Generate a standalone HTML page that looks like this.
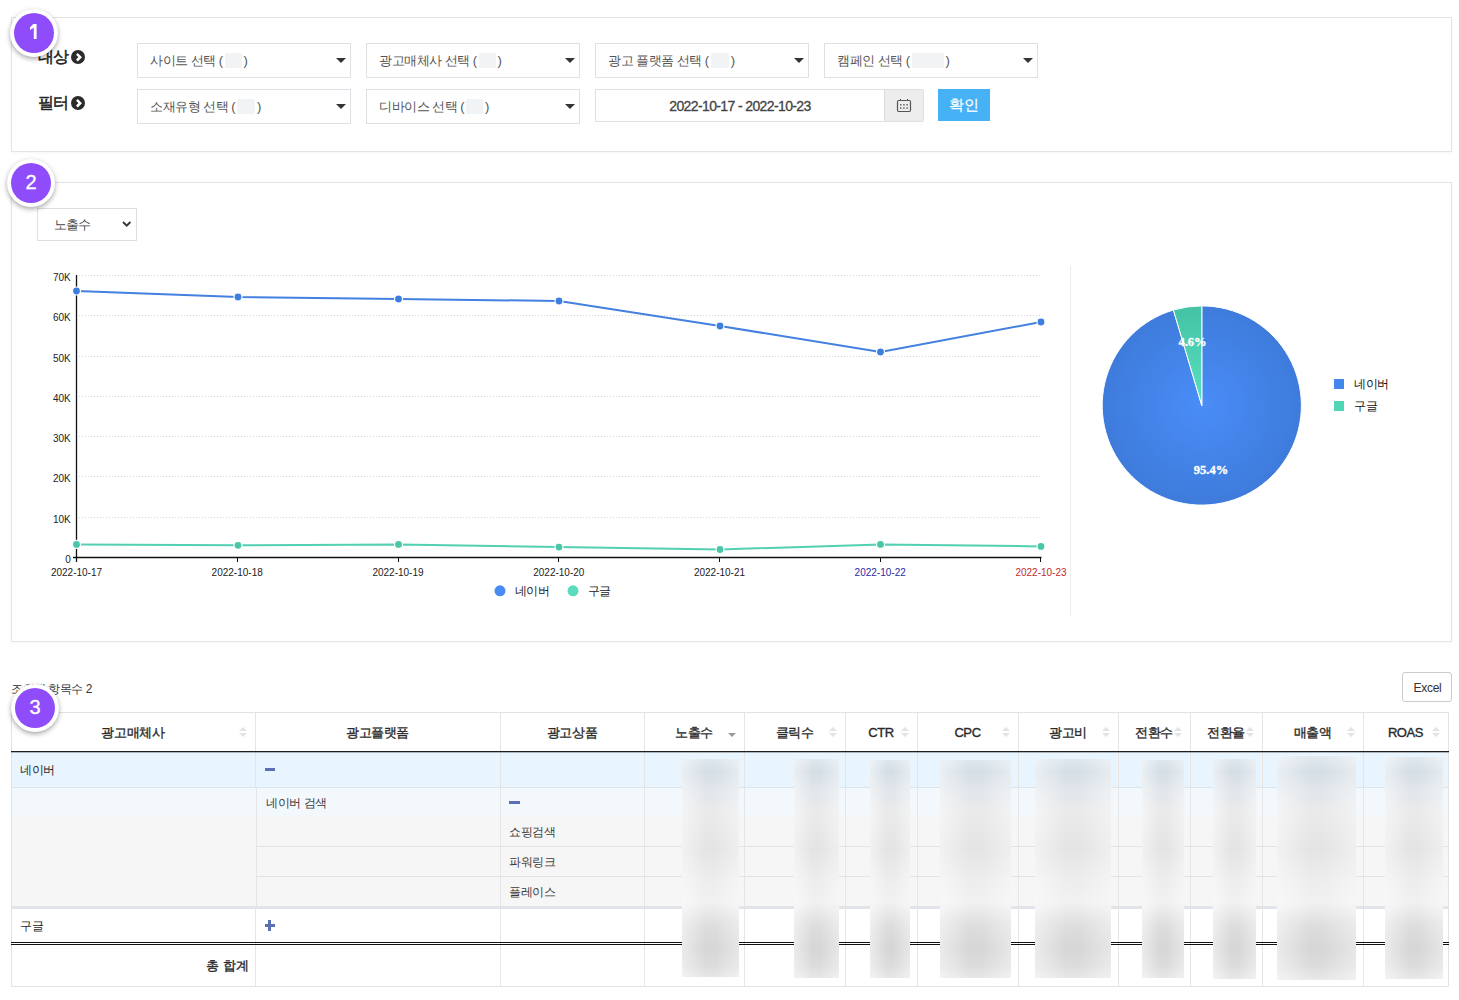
<!DOCTYPE html>
<html><head><meta charset="utf-8">
<style>
*{box-sizing:border-box;margin:0;padding:0}
html,body{width:1459px;height:1000px;overflow:hidden;background:#fff}
body{position:relative;font-family:"Liberation Sans",sans-serif;color:#333}
.abs{position:absolute}
.box{position:absolute;border:1px solid #e2e4e7;background:#fff;box-shadow:0 1px 3px rgba(0,0,0,.04)}
.sel{position:absolute;height:35px;width:214px;border:1px solid #dde0e4;background:#fff;font-size:13px;color:#555;line-height:33px;padding-left:12px;white-space:nowrap;letter-spacing:-0.5px}
.sel .tri{position:absolute;left:198px;top:14px;width:0;height:0;border-left:5px solid transparent;border-right:5px solid transparent;border-top:5px solid #333}
.sel .bl{display:inline-block;vertical-align:middle;height:15px;background:#f1f3f5;border-radius:2px;margin:0 2px;position:relative;top:-1px}
.lbl{position:absolute;font-size:16px;font-weight:normal;color:#222;line-height:16px;letter-spacing:-0.6px;-webkit-text-stroke:0.5px #222}
.chev{position:absolute;width:14px;height:14px;border-radius:50%;background:#2b2b2b}
.badge{position:absolute;width:48px;height:48px;border-radius:50%;background:#fff;box-shadow:0 2px 5px rgba(0,0,0,.35)}
.badge span{position:absolute;left:4px;top:4px;width:40px;height:40px;border-radius:50%;background:#8f4cfa;color:#fff;font-size:20px;line-height:39px;text-align:center;-webkit-text-stroke:0.3px #fff}
.th{position:absolute;top:714px;height:38px;line-height:38px;text-align:center;font-size:13px;font-weight:normal;color:#2a2a2a;letter-spacing:-0.4px;-webkit-text-stroke:0.35px #2a2a2a}
.sorti{position:absolute;top:727px;width:8px;height:10px}
.sorti:before{content:"";position:absolute;left:0;top:0;border-left:4px solid transparent;border-right:4px solid transparent;border-bottom:4px solid #e3e3e3}
.sorti:after{content:"";position:absolute;left:0;top:6px;border-left:4px solid transparent;border-right:4px solid transparent;border-top:4px solid #e3e3e3}
.td{position:absolute;font-size:12px;line-height:16px;color:#333;white-space:nowrap;letter-spacing:-0.4px}
.blur{position:absolute;overflow:hidden;background:#ededed}
.bi{position:absolute;left:-10px;right:-10px;top:0;bottom:0;filter:blur(9px)}
.bi b{position:absolute;left:18px;right:18px}
</style></head>
<body>

<!-- Section 1 -->
<div class="box" style="left:11px;top:17px;width:1441px;height:135px"></div>
<div class="lbl" style="left:38px;top:49px">대상</div>
<div class="chev" style="left:71px;top:50px"><svg width="14" height="14" viewBox="0 0 14 14"><path d="M5.9 3.9 L9.2 7.2 L5.9 10.5" fill="none" stroke="#fff" stroke-width="2.5"/></svg></div>
<div class="lbl" style="left:38px;top:95px">필터</div>
<div class="chev" style="left:71px;top:96px"><svg width="14" height="14" viewBox="0 0 14 14"><path d="M5.9 3.9 L9.2 7.2 L5.9 10.5" fill="none" stroke="#fff" stroke-width="2.5"/></svg></div>

<div class="sel" style="left:137px;top:43px">사이트 선택 (<span class="bl" style="width:17px"></span>)<i class="tri"></i></div>
<div class="sel" style="left:366px;top:43px">광고매체사 선택 (<span class="bl" style="width:17px"></span>)<i class="tri"></i></div>
<div class="sel" style="left:595px;top:43px">광고 플랫폼 선택 (<span class="bl" style="width:18px"></span>)<i class="tri"></i></div>
<div class="sel" style="left:824px;top:43px">캠페인 선택 (<span class="bl" style="width:32px"></span>)<i class="tri"></i></div>
<div class="sel" style="left:137px;top:89px">소재유형 선택 (<span class="bl" style="width:18px"></span>)<i class="tri"></i></div>
<div class="sel" style="left:366px;top:89px">디바이스 선택 (<span class="bl" style="width:17px"></span>)<i class="tri"></i></div>

<div class="abs" style="left:595px;top:89px;width:329px;height:33px;border:1px solid #dde0e4;border-radius:0 2px 2px 0;background:#fff">
  <div class="abs" style="left:0;top:0;width:288px;height:31px;text-align:center;font-size:14px;font-weight:normal;-webkit-text-stroke:0.3px #444;color:#444;line-height:33px;letter-spacing:-0.62px">2022-10-17 - 2022-10-23</div>
  <div class="abs" style="left:288px;top:0;width:39px;height:31px;background:#ededed;border-left:1px solid #dcdcdc">
    <svg class="abs" style="left:11px;top:8px" width="16" height="15" viewBox="0 0 16 15"><rect x="1.5" y="2.5" width="13" height="11" rx="1.2" fill="none" stroke="#555" stroke-width="1.2"/><path d="M4.5 1v2M11.5 1v2" stroke="#555" stroke-width="1"/><g fill="#666"><rect x="4" y="6" width="1.5" height="1.5"/><rect x="7.2" y="6" width="1.5" height="1.5"/><rect x="10.4" y="6" width="1.5" height="1.5"/><rect x="4" y="9.3" width="1.5" height="1.5"/><rect x="7.2" y="9.3" width="1.5" height="1.5"/><rect x="10.4" y="9.3" width="1.5" height="1.5"/></g></svg>
  </div>
</div>
<div class="abs" style="left:938px;top:89px;width:52px;height:32px;background:#46b1f5;color:#fff;font-size:14.5px;line-height:33px;text-align:center;-webkit-text-stroke:0.2px #fff">확인</div>

<!-- Section 2 -->
<div class="box" style="left:11px;top:182px;width:1441px;height:460px"></div>
<div class="abs" style="left:37px;top:208px;width:100px;height:33px;border:1px solid #dedede;font-size:13px;color:#444;line-height:31px;padding-left:16px;letter-spacing:-1px">노출수
  <svg class="abs" style="left:84px;top:12px" width="11" height="8" viewBox="0 0 11 8"><path d="M1 1 L4.7 4.7 L8.4 1" fill="none" stroke="#3a3a3a" stroke-width="2"/></svg>
</div>
<div class="abs" style="left:1070px;top:266px;width:1px;height:350px;background:#ececec"></div>

<!-- Section 3 header -->
<div class="abs" style="left:11px;top:682px;font-size:12px;color:#333;line-height:14px;letter-spacing:-0.5px">조회된 항목수&nbsp;2</div>
<div class="abs" style="left:1402px;top:672px;width:50px;height:30px;border:1px solid #ccc;border-radius:3px;font-size:12px;color:#333;line-height:30px;text-align:center;letter-spacing:-0.3px;padding-left:1px">Excel</div>

<div class="abs" style="left:11px;top:752px;width:1437px;height:35px;background:#e9f5fe"></div>
<div class="abs" style="left:11px;top:787px;width:1437px;height:1px;background:#dde5ec"></div>
<div class="abs" style="left:11px;top:788px;width:1437px;height:29px;background:#f3f8fd"></div>
<div class="abs" style="left:11px;top:817px;width:1437px;height:89px;background:#f6f6f6"></div>
<div class="abs" style="left:256px;top:846px;width:1192px;height:1px;background:#e4e4e4"></div>
<div class="abs" style="left:256px;top:876px;width:1192px;height:1px;background:#e4e4e4"></div>
<div class="abs" style="left:11px;top:906px;width:1437px;height:3px;background:#e1e4e8"></div>
<div class="abs" style="left:255px;top:712px;width:1px;height:76px;background:#e6e6e6"></div><div class="abs" style="left:256px;top:788px;width:1px;height:118px;background:#e6e6e6"></div><div class="abs" style="left:255px;top:906px;width:1px;height:80px;background:#e6e6e6"></div>
<div class="abs" style="left:500px;top:712px;width:1px;height:274px;background:#e6e6e6"></div>
<div class="abs" style="left:644px;top:712px;width:1px;height:274px;background:#e6e6e6"></div>
<div class="abs" style="left:744px;top:712px;width:1px;height:274px;background:#e6e6e6"></div>
<div class="abs" style="left:845px;top:712px;width:1px;height:274px;background:#e6e6e6"></div>
<div class="abs" style="left:917px;top:712px;width:1px;height:274px;background:#e6e6e6"></div>
<div class="abs" style="left:1018px;top:712px;width:1px;height:274px;background:#e6e6e6"></div>
<div class="abs" style="left:1118px;top:712px;width:1px;height:274px;background:#e6e6e6"></div>
<div class="abs" style="left:1190px;top:712px;width:1px;height:274px;background:#e6e6e6"></div>
<div class="abs" style="left:1262px;top:712px;width:1px;height:274px;background:#e6e6e6"></div>
<div class="abs" style="left:1363px;top:712px;width:1px;height:274px;background:#e6e6e6"></div>
<div class="abs" style="left:11px;top:712px;width:1438px;height:275px;border:1px solid #e3e3e3"></div>
<div class="abs" style="left:11px;top:751px;width:1438px;height:1px;background:#1e1e1e"></div><div class="abs" style="left:11px;top:752px;width:1438px;height:1px;background:rgba(30,30,30,.3)"></div>
<div class="abs" style="left:11px;top:942px;width:1438px;height:3px;border-top:1px solid #111;border-bottom:1px solid #111"></div>
<div class="th" style="left:11px;width:244px">광고매체사</div>
<i class="sorti" style="left:239px"></i>
<div class="th" style="left:255px;width:245px">광고플랫폼</div>
<div class="th" style="left:500px;width:144px">광고상품</div>
<div class="th" style="left:644px;width:100px">노출수</div>
<i class="abs" style="left:728px;top:733px;width:0;height:0;border-left:4px solid transparent;border-right:4px solid transparent;border-top:4px solid #999"></i>
<div class="th" style="left:744px;width:101px">클릭수</div>
<i class="sorti" style="left:829px"></i>
<div class="th" style="left:845px;width:72px">CTR</div>
<i class="sorti" style="left:901px"></i>
<div class="th" style="left:917px;width:101px">CPC</div>
<i class="sorti" style="left:1002px"></i>
<div class="th" style="left:1018px;width:100px">광고비</div>
<i class="sorti" style="left:1102px"></i>
<div class="th" style="left:1118px;width:72px">전환수</div>
<i class="sorti" style="left:1174px"></i>
<div class="th" style="left:1190px;width:72px">전환율</div>
<i class="sorti" style="left:1246px"></i>
<div class="th" style="left:1262px;width:101px">매출액</div>
<i class="sorti" style="left:1347px"></i>
<div class="th" style="left:1363px;width:85px">ROAS</div>
<i class="sorti" style="left:1432px"></i>
<div class="td" style="left:20px;top:762px;color:#1e1e1e">네이버</div>
<div class="td" style="left:266px;top:795px;color:#3a3a3a">네이버 검색</div>
<div class="td" style="left:509px;top:824px;color:#3a3a3a">쇼핑검색</div>
<div class="td" style="left:509px;top:854px;color:#3a3a3a">파워링크</div>
<div class="td" style="left:509px;top:884px;color:#3a3a3a">플레이스</div>
<div class="td" style="left:20px;top:918px;color:#1e1e1e">구글</div>
<div class="td" style="left:150px;width:99px;top:958px;text-align:right;font-weight:normal;-webkit-text-stroke:0.35px #2a2a2a;color:#2a2a2a;font-size:13px;letter-spacing:0">총 합계</div>
<div class="abs" style="left:265px;top:768px;width:10px;height:3px;background:#5a70b2"></div>
<div class="abs" style="left:509px;top:801px;width:11px;height:3px;background:#5a70b2"></div>
<div class="abs" style="left:265px;top:924px;width:10px;height:3px;background:#5a70b2"></div>
<div class="abs" style="left:268px;top:920px;width:3px;height:11px;background:#5a70b2"></div>
<div class="blur" style="left:682px;top:759px;width:57px;height:218px;background:linear-gradient(to right,rgba(255,255,255,.5),rgba(255,255,255,0) 42%,rgba(255,255,255,0) 58%,rgba(255,255,255,.4)),linear-gradient(to bottom,#e4ecf2 -7px,#d5dee5 13px,#e2e7eb 33px,#eaeaea 56px,#e4e4e4 91px,#ededed 121px,#f1f1f1 143px,#dedede 166px,#d6d6d6 189px,#dcdcdc 207px,#ebebeb 223px)"></div>
<div class="blur" style="left:794px;top:759px;width:45px;height:219px;background:linear-gradient(to right,rgba(255,255,255,.5),rgba(255,255,255,0) 42%,rgba(255,255,255,0) 58%,rgba(255,255,255,.4)),linear-gradient(to bottom,#e4ecf2 -7px,#d5dee5 13px,#e2e7eb 33px,#eaeaea 56px,#e4e4e4 91px,#ededed 121px,#f1f1f1 143px,#dedede 166px,#d6d6d6 189px,#dcdcdc 207px,#ebebeb 223px)"></div>
<div class="blur" style="left:870px;top:760px;width:40px;height:218px;background:linear-gradient(to right,rgba(255,255,255,.5),rgba(255,255,255,0) 42%,rgba(255,255,255,0) 58%,rgba(255,255,255,.4)),linear-gradient(to bottom,#e4ecf2 -8px,#d5dee5 12px,#e2e7eb 32px,#eaeaea 55px,#e4e4e4 90px,#ededed 120px,#f1f1f1 142px,#dedede 165px,#d6d6d6 188px,#dcdcdc 206px,#ebebeb 222px)"></div>
<div class="blur" style="left:940px;top:760px;width:71px;height:218px;background:linear-gradient(to right,rgba(255,255,255,.5),rgba(255,255,255,0) 42%,rgba(255,255,255,0) 58%,rgba(255,255,255,.4)),linear-gradient(to bottom,#e4ecf2 -8px,#d5dee5 12px,#e2e7eb 32px,#eaeaea 55px,#e4e4e4 90px,#ededed 120px,#f1f1f1 142px,#dedede 165px,#d6d6d6 188px,#dcdcdc 206px,#ebebeb 222px)"></div>
<div class="blur" style="left:1035px;top:759px;width:76px;height:219px;background:linear-gradient(to right,rgba(255,255,255,.5),rgba(255,255,255,0) 42%,rgba(255,255,255,0) 58%,rgba(255,255,255,.4)),linear-gradient(to bottom,#e4ecf2 -7px,#d5dee5 13px,#e2e7eb 33px,#eaeaea 56px,#e4e4e4 91px,#ededed 121px,#f1f1f1 143px,#dedede 166px,#d6d6d6 189px,#dcdcdc 207px,#ebebeb 223px)"></div>
<div class="blur" style="left:1142px;top:760px;width:42px;height:218px;background:linear-gradient(to right,rgba(255,255,255,.5),rgba(255,255,255,0) 42%,rgba(255,255,255,0) 58%,rgba(255,255,255,.4)),linear-gradient(to bottom,#e4ecf2 -8px,#d5dee5 12px,#e2e7eb 32px,#eaeaea 55px,#e4e4e4 90px,#ededed 120px,#f1f1f1 142px,#dedede 165px,#d6d6d6 188px,#dcdcdc 206px,#ebebeb 222px)"></div>
<div class="blur" style="left:1213px;top:759px;width:43px;height:220px;background:linear-gradient(to right,rgba(255,255,255,.5),rgba(255,255,255,0) 42%,rgba(255,255,255,0) 58%,rgba(255,255,255,.4)),linear-gradient(to bottom,#e4ecf2 -7px,#d5dee5 13px,#e2e7eb 33px,#eaeaea 56px,#e4e4e4 91px,#ededed 121px,#f1f1f1 143px,#dedede 166px,#d6d6d6 189px,#dcdcdc 207px,#ebebeb 223px)"></div>
<div class="blur" style="left:1277px;top:756px;width:79px;height:224px;background:linear-gradient(to right,rgba(255,255,255,.5),rgba(255,255,255,0) 42%,rgba(255,255,255,0) 58%,rgba(255,255,255,.4)),linear-gradient(to bottom,#e4ecf2 -4px,#d5dee5 16px,#e2e7eb 36px,#eaeaea 59px,#e4e4e4 94px,#ededed 124px,#f1f1f1 146px,#dedede 169px,#d6d6d6 192px,#dcdcdc 210px,#ebebeb 226px)"></div>
<div class="blur" style="left:1385px;top:757px;width:58px;height:222px;background:linear-gradient(to right,rgba(255,255,255,.5),rgba(255,255,255,0) 42%,rgba(255,255,255,0) 58%,rgba(255,255,255,.4)),linear-gradient(to bottom,#e4ecf2 -5px,#d5dee5 15px,#e2e7eb 35px,#eaeaea 58px,#e4e4e4 93px,#ededed 123px,#f1f1f1 145px,#dedede 168px,#d6d6d6 191px,#dcdcdc 209px,#ebebeb 225px)"></div>
<svg class="abs" style="left:0;top:0" width="1459" height="1000" viewBox="0 0 1459 1000">
<defs><radialGradient id="gb" cx="1201.8" cy="405.4" r="100" gradientUnits="userSpaceOnUse"><stop offset="0" stop-color="#4a8df8"/><stop offset="1" stop-color="#3e7bdb"/></radialGradient>
<radialGradient id="gg" cx="1201.8" cy="405.4" r="100" gradientUnits="userSpaceOnUse"><stop offset="0" stop-color="#58e0c0"/><stop offset="1" stop-color="#44c3a5"/></radialGradient></defs>
<text x="70.8" y="562.7" text-anchor="end" font-size="10" fill="#222">0</text>
<line x1="79" y1="517.5" x2="1040" y2="517.5" stroke="#d6d6d6" stroke-width="1" stroke-dasharray="1 2"/>
<text x="70.8" y="522.7" text-anchor="end" font-size="10" fill="#222">10K</text>
<line x1="79" y1="476.5" x2="1040" y2="476.5" stroke="#d6d6d6" stroke-width="1" stroke-dasharray="1 2"/>
<text x="70.8" y="481.7" text-anchor="end" font-size="10" fill="#222">20K</text>
<line x1="79" y1="436.5" x2="1040" y2="436.5" stroke="#d6d6d6" stroke-width="1" stroke-dasharray="1 2"/>
<text x="70.8" y="441.7" text-anchor="end" font-size="10" fill="#222">30K</text>
<line x1="79" y1="396.5" x2="1040" y2="396.5" stroke="#d6d6d6" stroke-width="1" stroke-dasharray="1 2"/>
<text x="70.8" y="401.7" text-anchor="end" font-size="10" fill="#222">40K</text>
<line x1="79" y1="356.5" x2="1040" y2="356.5" stroke="#d6d6d6" stroke-width="1" stroke-dasharray="1 2"/>
<text x="70.8" y="361.7" text-anchor="end" font-size="10" fill="#222">50K</text>
<line x1="79" y1="315.5" x2="1040" y2="315.5" stroke="#d6d6d6" stroke-width="1" stroke-dasharray="1 2"/>
<text x="70.8" y="320.7" text-anchor="end" font-size="10" fill="#222">60K</text>
<line x1="79" y1="275.5" x2="1040" y2="275.5" stroke="#d6d6d6" stroke-width="1" stroke-dasharray="1 2"/>
<text x="70.8" y="280.7" text-anchor="end" font-size="10" fill="#222">70K</text>
<line x1="76.5" y1="275" x2="76.5" y2="562" stroke="#111" stroke-width="1.3"/>
<line x1="73" y1="557.5" x2="1041.5" y2="557.5" stroke="#111" stroke-width="1.3"/>
<line x1="76.5" y1="557" x2="76.5" y2="562" stroke="#111" stroke-width="1"/>
<text x="76.5" y="576" text-anchor="middle" font-size="10" fill="#222">2022-10-17</text>
<line x1="237.5" y1="557" x2="237.5" y2="562" stroke="#111" stroke-width="1"/>
<text x="237.2" y="576" text-anchor="middle" font-size="10" fill="#222">2022-10-18</text>
<line x1="398.5" y1="557" x2="398.5" y2="562" stroke="#111" stroke-width="1"/>
<text x="398.0" y="576" text-anchor="middle" font-size="10" fill="#222">2022-10-19</text>
<line x1="558.5" y1="557" x2="558.5" y2="562" stroke="#111" stroke-width="1"/>
<text x="558.8" y="576" text-anchor="middle" font-size="10" fill="#222">2022-10-20</text>
<line x1="719.5" y1="557" x2="719.5" y2="562" stroke="#111" stroke-width="1"/>
<text x="719.5" y="576" text-anchor="middle" font-size="10" fill="#222">2022-10-21</text>
<line x1="880.5" y1="557" x2="880.5" y2="562" stroke="#111" stroke-width="1"/>
<text x="880.2" y="576" text-anchor="middle" font-size="10" fill="#2b2ba6">2022-10-22</text>
<line x1="1040.5" y1="557" x2="1040.5" y2="562" stroke="#111" stroke-width="1"/>
<text x="1041.0" y="576" text-anchor="middle" font-size="10" fill="#c42b2b">2022-10-23</text>
<polyline points="76.5,291 238,297 398.5,299 559,301 720,326 880.5,352 1041,322" fill="none" stroke="#4380df" stroke-width="2"/>
<circle cx="76.5" cy="291" r="4" fill="#3c7de0" stroke="#fff" stroke-width="1.2"/>
<circle cx="238" cy="297" r="4" fill="#3c7de0" stroke="#fff" stroke-width="1.2"/>
<circle cx="398.5" cy="299" r="4" fill="#3c7de0" stroke="#fff" stroke-width="1.2"/>
<circle cx="559" cy="301" r="4" fill="#3c7de0" stroke="#fff" stroke-width="1.2"/>
<circle cx="720" cy="326" r="4" fill="#3c7de0" stroke="#fff" stroke-width="1.2"/>
<circle cx="880.5" cy="352" r="4" fill="#3c7de0" stroke="#fff" stroke-width="1.2"/>
<circle cx="1041" cy="322" r="4" fill="#3c7de0" stroke="#fff" stroke-width="1.2"/>
<polyline points="76.5,544.4 238,545.3 398.5,544.4 559,547.1 720,549.5 880.5,544.4 1041,546.4" fill="none" stroke="#52d0b2" stroke-width="2"/>
<circle cx="76.5" cy="544.4" r="4" fill="#48c6a8" stroke="#fff" stroke-width="1.2"/>
<circle cx="238" cy="545.3" r="4" fill="#48c6a8" stroke="#fff" stroke-width="1.2"/>
<circle cx="398.5" cy="544.4" r="4" fill="#48c6a8" stroke="#fff" stroke-width="1.2"/>
<circle cx="559" cy="547.1" r="4" fill="#48c6a8" stroke="#fff" stroke-width="1.2"/>
<circle cx="720" cy="549.5" r="4" fill="#48c6a8" stroke="#fff" stroke-width="1.2"/>
<circle cx="880.5" cy="544.4" r="4" fill="#48c6a8" stroke="#fff" stroke-width="1.2"/>
<circle cx="1041" cy="546.4" r="4" fill="#48c6a8" stroke="#fff" stroke-width="1.2"/>
<circle cx="500" cy="590.8" r="5.5" fill="#4a8af4"/>
<circle cx="573" cy="590.8" r="5.5" fill="#5adbbd"/>
<path d="M1201.8,405.5 L1201.8,305.90 A99.6,99.6 0 1 1 1173.41,310.03 Z" fill="url(#gb)" stroke="#fff" stroke-width="1"/>
<path d="M1201.8,405.5 L1173.41,310.03 A99.6,99.6 0 0 1 1201.8,305.90 Z" fill="url(#gg)" stroke="#fff" stroke-width="1"/>
<text x="1211" y="474" text-anchor="middle" font-family="Liberation Serif" font-weight="bold" font-size="12.5" fill="#fff" stroke="#fff" stroke-width="0.35">95.4%</text>
<text x="1192.5" y="346" text-anchor="middle" font-family="Liberation Serif" font-weight="bold" font-size="12.5" fill="#fff" stroke="#fff" stroke-width="0.35">4.6%</text>
<rect x="1334" y="379" width="10" height="10" fill="#4485f0"/>
<rect x="1334" y="401" width="10" height="10" fill="#4fd6b6"/>
</svg>
<div class="abs" style="left:515px;top:584px;font-size:11.5px;color:#222;line-height:14px;letter-spacing:-0.6px">네이버</div>
<div class="abs" style="left:588px;top:584px;font-size:11.5px;color:#222;line-height:14px;letter-spacing:-0.6px">구글</div>
<div class="abs" style="left:1354px;top:377px;font-size:12px;color:#111;line-height:14px;letter-spacing:-0.4px">네이버</div>
<div class="abs" style="left:1354px;top:399px;font-size:12px;color:#111;line-height:14px;letter-spacing:-0.4px">구글</div>

<div class="badge" style="left:10px;top:9px"><span><svg class="abs" style="left:0;top:0" width="40" height="40"><polygon points="19.6,11 22.6,11 22.6,26 19.8,26 19.8,14.7 16,16.9 16,14.3 19.3,11" fill="#fff"/></svg></span></div>
<div class="badge" style="left:7px;top:159px"><span>2</span></div>
<div class="badge" style="left:11px;top:684px"><span>3</span></div>
</body></html>
